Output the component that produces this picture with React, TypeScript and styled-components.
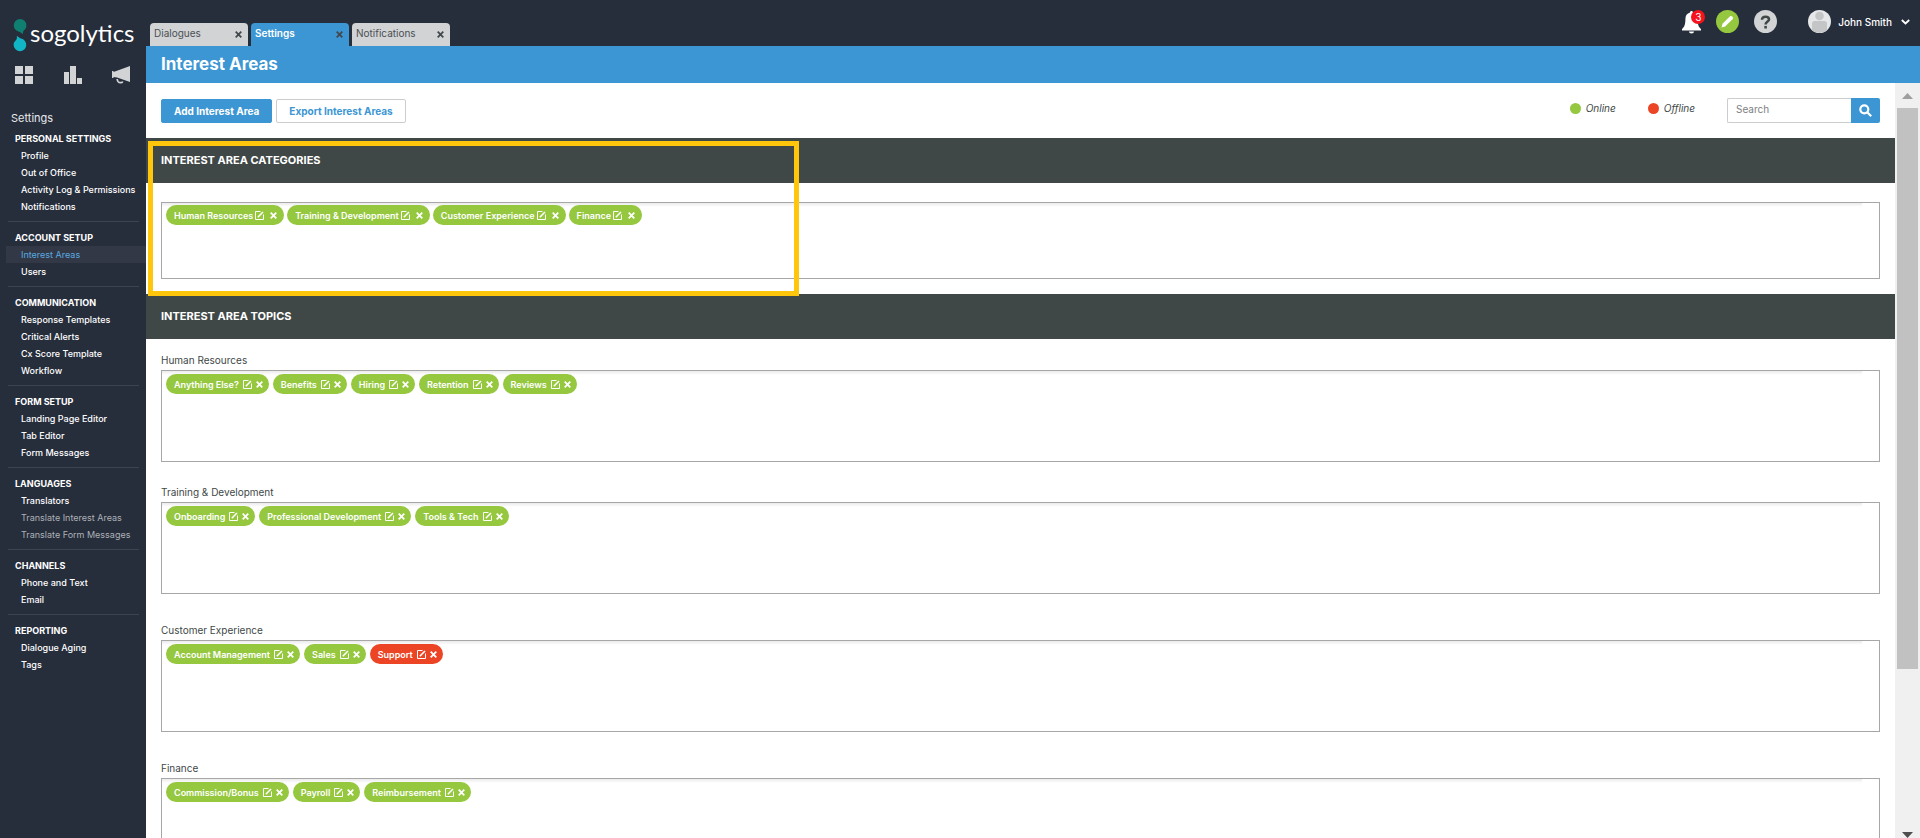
import React from "react";
import styled, { createGlobalStyle } from "styled-components";

const colors = {
  navy: "#262d3b",
  navyActive: "#323845",
  divider: "#3d4350",
  blue: "#3c96d3",
  slate: "#404847",
  green: "#95c73f",
  red: "#ec4526",
  grey: "#d1d3d4",
  boxBorder: "#a7a7a7",
  highlight: "#ffc60b",
};

const GlobalStyle = createGlobalStyle`
  * { box-sizing: border-box; }
  body {
    margin: 0;
    font-family: Inter, "Open Sans", sans-serif;
    font-size: 10px;
    color: ${colors.slate};
    background: #fff;
  }
  button, input { font: inherit; color: inherit; }
  button { border: 0; padding: 0; background: none; cursor: pointer; }
  a { color: inherit; text-decoration: none; }
  h1, h2, h3, ul, p { margin: 0; padding: 0; }
  ul { list-style: none; }
  svg { display: block; flex: none; }
`;

const Shell = styled.div`
  display: grid;
  grid-template-columns: 146px minmax(0, 1fr);
  height: 100vh;
  overflow: hidden;
`;

const Sidebar = styled.aside`
  background: ${colors.navy};
  color: #fff;
  overflow: hidden;
`;

const Logo = styled.a`
  display: flex;
  align-items: center;
  gap: 3px;
  height: 34px;
  margin-top: 18px;
  padding-left: 13px;
`;

const LogoName = styled.span`
  padding-bottom: 4px;
  font-family: Lato, sans-serif;
  font-size: 24px;
  line-height: 28px;
`;

const QuickNav = styled.nav`
  display: flex;
  justify-content: space-between;
  padding: 14px 16px 0 15px;
  color: ${colors.grey};
`;

const SidebarTitle = styled.h2`
  margin-top: 24px;
  padding-left: 11px;
  font-size: 11px;
  font-weight: 400;
  line-height: 20px;
  color: #e8e9eb;
`;

const MenuSection = styled.section`
  padding-bottom: 6px;

  & + &::before {
    content: "";
    display: block;
    height: 1px;
    margin: 0 7px 8px 8px;
    background: ${colors.divider};
  }
  &:first-of-type {
    padding-top: 3px;
  }
`;

const MenuHeading = styled.h3`
  padding-left: 15px;
  font-size: 9px;
  font-weight: 700;
  line-height: 16px;
`;

const MenuLink = styled.a<{ $active?: boolean; $muted?: boolean }>`
  display: block;
  margin-left: 6px;
  padding-left: 15px;
  font-size: 9px;
  font-weight: ${(p) => (p.$muted || p.$active ? 400 : 500)};
  line-height: 17px;
  white-space: nowrap;
  color: ${(p) => (p.$active ? "#5aa9e0" : p.$muted ? "#adb1b7" : "#fff")};
  background: ${(p) => (p.$active ? colors.navyActive : "transparent")};
`;

const Workspace = styled.div`
  display: flex;
  flex-direction: column;
  min-width: 0;
  min-height: 0;
`;

const TopBar = styled.header`
  display: flex;
  justify-content: space-between;
  height: 46px;
  padding: 0 10px 0 4px;
  background: ${colors.navy};
  color: #fff;
`;

const TabStrip = styled.nav`
  display: flex;
  align-items: flex-end;
  gap: 3px;
`;

const Tab = styled.div<{ $active?: boolean }>`
  display: flex;
  justify-content: space-between;
  align-items: center;
  width: 98px;
  height: 23px;
  padding: 0 6px 3px 4px;
  border-radius: 4px 4px 0 0;
  font-weight: ${(p) => (p.$active ? 600 : 400)};
  color: ${(p) => (p.$active ? "#fff" : "#4b4f54")};
  background: ${(p) => (p.$active ? colors.blue : colors.grey)};

  button {
    padding-top: 3px;
    color: #43484d;
  }
`;

const AccountTools = styled.div`
  display: flex;
  align-items: center;
  gap: 15px;
  padding-bottom: 3px;
`;

const BellButton = styled.button`
  position: relative;
  height: 24px;
`;

const Badge = styled.span`
  position: absolute;
  top: 0;
  right: -4px;
  width: 14px;
  height: 14px;
  border-radius: 50%;
  background: #f5141d;
  line-height: 14px;
  text-align: center;
`;

const RoundButton = styled.button<{ $tone: string }>`
  display: grid;
  place-items: center;
  width: 23px;
  height: 23px;
  border-radius: 50%;
  background: ${(p) => p.$tone};
  color: #fff;
`;

const UserMenu = styled.button`
  display: flex;
  align-items: center;
  gap: 7px;
  margin-left: 16px;
  font-weight: 500;

  svg:last-child {
    margin-left: 2px;
  }
`;

const TitleBar = styled.div`
  height: 37px;
  padding: 6px 15px 0;
  background: ${colors.blue};
  color: #fff;

  h1 {
    font-size: 17px;
    font-weight: 700;
    line-height: 24px;
  }
`;

const Body = styled.div`
  display: grid;
  grid-template-columns: minmax(0, 1fr) 25px;
  flex: 1;
  min-height: 0;
`;

const Content = styled.main`
  overflow-y: auto;
  scrollbar-width: none;
`;

const Toolbar = styled.div`
  display: flex;
  justify-content: space-between;
  align-items: center;
  height: 55px;
  padding: 0 15px;
`;

const ButtonRow = styled.div`
  display: flex;
  gap: 4px;
`;

const ActionButton = styled.button<{ $primary?: boolean }>`
  height: 24px;
  padding: 0 12px;
  border: 1px solid ${(p) => (p.$primary ? colors.blue : "#cbcdce")};
  border-radius: 2px;
  font-weight: 700;
  color: ${(p) => (p.$primary ? "#fff" : colors.blue)};
  background: ${(p) => (p.$primary ? colors.blue : "#fff")};
`;

const ToolbarEnd = styled.div`
  display: flex;
  align-items: center;
  gap: 32px;
`;

const LegendItem = styled.span<{ $tone: string }>`
  display: flex;
  align-items: center;
  gap: 5px;
  padding-bottom: 5px;
  font-style: italic;

  &::before {
    content: "";
    width: 11px;
    height: 11px;
    border-radius: 50%;
    background: ${(p) => p.$tone};
  }
`;

const SearchForm = styled.form`
  display: flex;
  height: 25px;
`;

const SearchInput = styled.input`
  width: 124px;
  padding: 0 8px 4px;
  border: 1px solid #cbcdce;
  border-right: 0;
  border-radius: 2px 0 0 2px;
  outline: 0;

  &::placeholder {
    color: #7d8082;
    opacity: 1;
  }
`;

const SearchButton = styled.button`
  display: grid;
  place-items: center;
  width: 29px;
  border-radius: 0 2px 2px 0;
  background: ${colors.blue};
  color: #fff;
`;

const Panel = styled.section`
  position: relative;
`;

const PanelHeader = styled.h2`
  height: 45px;
  padding: 12px 15px 0;
  font-size: 11px;
  font-weight: 700;
  line-height: 20px;
  color: #fff;
  background: ${colors.slate};
`;

const CategoryBody = styled.div`
  padding: 19px 15px 15px;
`;

const TopicBody = styled.div`
  padding: 11px 15px;
`;

const TopicGroup = styled.div<{ $tight?: boolean }>`
  margin-bottom: ${(p) => (p.$tight ? 20 : 26)}px;
`;

const TopicLabel = styled.h3`
  font-size: 10px;
  font-weight: 400;
  line-height: 20px;
`;

const PillBox = styled.ul<{ $topics?: boolean }>`
  display: flex;
  flex-wrap: wrap;
  align-content: flex-start;
  gap: ${(p) => (p.$topics ? 4 : 3)}px;
  min-height: ${(p) => (p.$topics ? 92 : 77)}px;
  padding: ${(p) => (p.$topics ? 3 : 2)}px 4px;
  border: 1px solid ${colors.boxBorder};
  background: linear-gradient(#ebebeb, #fff) no-repeat top left / calc(100% - 17px) 4px;
`;

const Pill = styled.li<{ $offline?: boolean; $topic?: boolean }>`
  display: flex;
  align-items: center;
  height: 20px;
  padding: 0 ${(p) => (p.$topic ? 6 : 7)}px 0 8px;
  border-radius: 10px;
  font-size: 9px;
  font-weight: 600;
  white-space: nowrap;
  color: #fff;
  background: ${(p) => (p.$offline ? colors.red : colors.green)};

  button:nth-of-type(1) {
    margin-left: ${(p) => (p.$topic ? 4 : 2)}px;
  }
  button:nth-of-type(2) {
    margin-left: ${(p) => (p.$topic ? 4 : 6)}px;
  }
`;

const Callout = styled.div`
  position: absolute;
  top: 3px;
  left: 2px;
  z-index: 1;
  width: 651px;
  height: 155px;
  border: 5px solid ${colors.highlight};
  pointer-events: none;
`;

const ScrollTrack = styled.div`
  display: flex;
  flex-direction: column;
  align-items: center;
  background: #f0f0f0;
`;

const ScrollEnd = styled.div<{ $down?: boolean }>`
  display: flex;
  justify-content: center;
  align-items: ${(p) => (p.$down ? "flex-end" : "center")};
  height: ${(p) => (p.$down ? 0 : 25)}px;
  color: ${(p) => (p.$down ? "#4d4d4d" : "#9f9f9f")};
`;

const ScrollThumb = styled.div`
  flex: 561;
  width: 21px;
  background: #c1c1c1;
`;

const ScrollRest = styled.div`
  flex: 169;
`;

const LogoMark = () => (
  <svg width="14" height="34" viewBox="0 0 14 34" aria-hidden="true">
    <path d="M7 1a6.4 6.4 0 0 1 6.4 6.4c0 2.400-1.200 3.900-2.500 5-.9.900-1 2-.8 3.600C8.500 15.600 7.500 14 6 13.700A6.400 6.400 0 0 1 7 1z" fill="#0f7f72" />
    <path d="M7 33.200A6.400 6.400 0 0 1 .6 26.800c0-2.200 1.200-3.800 2.500-4.900 1-.9 1-2 .6-3.800 1.700.7 2.500 2 4.300 2.400A6.400 6.400 0 0 1 7 33.200z" fill="#10b5c6" />
  </svg>
);

const GridIcon = () => (
  <svg width="18" height="18" viewBox="0 0 18 18" fill="currentColor" aria-hidden="true">
    <path d="M0 0h8v8H0zM10 0h8v8h-8zM0 10h8v8H0zM10 10h8v8h-8z" />
  </svg>
);

const ChartIcon = () => (
  <svg width="18" height="18" viewBox="0 0 18 18" fill="currentColor" aria-hidden="true">
    <path d="M0 6h5v12H0zM6 0h6v18H6zM13 12h5v6h-5z" />
  </svg>
);

const MegaphoneIcon = () => (
  <svg width="18" height="18" viewBox="0 0 18 18" fill="currentColor" aria-hidden="true">
    <path d="M18 0v16L5 11.600 1.500 11V12H0V5h1.500v1z" />
    <path d="M5.200 13c.2 2.400 1.500 3.700 3.300 3.700 1.200 0 2-.6 2.200-1.300" fill="none" stroke="currentColor" strokeWidth="1.700" />
  </svg>
);

const CrossIcon = () => (
  <svg width="7" height="7" viewBox="0 0 7 7" stroke="currentColor" strokeWidth="1.800" aria-hidden="true">
    <path d="M.7.7l5.600 5.600M6.300.7L.7 6.300" />
  </svg>
);

const EditIcon = () => (
  <svg width="9" height="9" viewBox="0 0 9 9" fill="none" stroke="currentColor" aria-hidden="true">
    <path d="M5.500.5h-5v8h8v-5" />
    <path d="M2.800 6.200L8 1" strokeWidth="1.600" />
  </svg>
);

const BellIcon = () => (
  <svg width="19" height="24" viewBox="0 0 19 24" fill="#fff" aria-hidden="true">
    <path d="M9.500 1c.9 0 1.500.6 1.500 1.500 3 .8 4.600 3.300 4.600 6.500 0 5.500 1 8 3.400 10v1.500H0V19c2.400-2 3.400-4.500 3.400-10C3.400 5.800 5 3.300 8 2.500 8 1.600 8.600 1 9.500 1zM7 21.500h5c0 1.300-1 2-2.500 2s-2.500-.7-2.500-2z" />
  </svg>
);

const PencilIcon = () => (
  <svg width="13" height="13" viewBox="0 0 13 13" fill="#fff" aria-hidden="true">
    <path d="M.5 12.500l1-3.700 7.300-7.300c1.500-1.400 4.300 1 2.700 2.700L4.200 11.500z" />
  </svg>
);

const HelpIcon = () => (
  <svg width="11" height="14" viewBox="0 0 11 14" fill="none" stroke={colors.slate} strokeWidth="2.600" aria-hidden="true">
    <path d="M2 4.800C2 2.800 3.400 1.800 5.400 1.800S9 2.700 9 4.500C9 6.600 5.600 6.500 5.600 9.500" />
    <path d="M5.600 10.900v2.600" />
  </svg>
);

const AvatarIcon = () => (
  <svg width="23" height="23" viewBox="0 0 23 23" aria-hidden="true">
    <circle cx="11.500" cy="11.500" r="11.500" fill="#e6e7e8" />
    <circle cx="11.500" cy="6" r="4.300" fill="#c3c5c7" />
    <path d="M4 13.500c0-1.500 1-2.500 2.500-2.500h10c1.500 0 2.500 1 2.500 2.500v6.700a11.500 11.500 0 0 1-15 0z" fill="#c3c5c7" />
  </svg>
);

const ChevronIcon = () => (
  <svg width="9" height="6" viewBox="0 0 9 6" fill="none" stroke="currentColor" strokeWidth="1.800" aria-hidden="true">
    <path d="M.8 1l3.700 3.500L8.200 1" />
  </svg>
);

const SearchIcon = () => (
  <svg width="13" height="13" viewBox="0 0 13 13" fill="none" stroke="currentColor" strokeWidth="2.200" aria-hidden="true">
    <circle cx="5.300" cy="5.300" r="4" />
    <path d="M8.200 8.200l4 4" />
  </svg>
);

const ArrowIcon = ({ down }: { down?: boolean }) => (
  <svg width="11" height="6" viewBox="0 0 11 6" fill="currentColor" aria-hidden="true">
    <path d={down ? "M0 0h11L5.500 6z" : "M0 6h11L5.500 0z"} />
  </svg>
);

type MenuItem = { label: string; active?: boolean; muted?: boolean };

const menu: { heading: string; items: MenuItem[] }[] = [
  {
    heading: "PERSONAL SETTINGS",
    items: [
      { label: "Profile" },
      { label: "Out of Office" },
      { label: "Activity Log & Permissions" },
      { label: "Notifications" },
    ],
  },
  { heading: "ACCOUNT SETUP", items: [{ label: "Interest Areas", active: true }, { label: "Users" }] },
  {
    heading: "COMMUNICATION",
    items: [
      { label: "Response Templates" },
      { label: "Critical Alerts" },
      { label: "Cx Score Template" },
      { label: "Workflow" },
    ],
  },
  {
    heading: "FORM SETUP",
    items: [{ label: "Landing Page Editor" }, { label: "Tab Editor" }, { label: "Form Messages" }],
  },
  {
    heading: "LANGUAGES",
    items: [
      { label: "Translators" },
      { label: "Translate Interest Areas", muted: true },
      { label: "Translate Form Messages", muted: true },
    ],
  },
  { heading: "CHANNELS", items: [{ label: "Phone and Text" }, { label: "Email" }] },
  { heading: "REPORTING", items: [{ label: "Dialogue Aging" }, { label: "Tags" }] },
];

const tabs = ["Dialogues", "Settings", "Notifications"];

const categories = ["Human Resources", "Training & Development", "Customer Experience", "Finance"];

const topics: { name: string; items: string[]; tight?: boolean }[] = [
  { name: "Human Resources", items: ["Anything Else?", "Benefits", "Hiring", "Retention", "Reviews"], tight: true },
  { name: "Training & Development", items: ["Onboarding", "Professional Development", "Tools & Tech"] },
  { name: "Customer Experience", items: ["Account Management", "Sales", "Support"] },
  { name: "Finance", items: ["Commission/Bonus", "Payroll", "Reimbursement"] },
];

const offline = new Set(["Support"]);

const AreaPill = ({ name, topic }: { name: string; topic?: boolean }) => (
  <Pill $topic={topic} $offline={offline.has(name)}>
    {name}
    <button type="button" aria-label={`Edit ${name}`}>
      <EditIcon />
    </button>
    <button type="button" aria-label={`Remove ${name}`}>
      <CrossIcon />
    </button>
  </Pill>
);

export default function App() {
  return (
    <>
      <GlobalStyle />
      <Shell>
        <Sidebar>
          <Logo href="#home">
            <LogoMark />
            <LogoName>sogolytics</LogoName>
          </Logo>
          <QuickNav aria-label="Modules">
            <a href="#dashboard" aria-label="Dashboard"><GridIcon /></a>
            <a href="#reports" aria-label="Reports"><ChartIcon /></a>
            <a href="#campaigns" aria-label="Campaigns"><MegaphoneIcon /></a>
          </QuickNav>
          <SidebarTitle>Settings</SidebarTitle>
          <nav aria-label="Settings">
            {menu.map((section) => (
              <MenuSection key={section.heading}>
                <MenuHeading>{section.heading}</MenuHeading>
                {section.items.map((item) => (
                  <MenuLink key={item.label} href="#settings" $active={item.active} $muted={item.muted}>
                    {item.label}
                  </MenuLink>
                ))}
              </MenuSection>
            ))}
          </nav>
        </Sidebar>

        <Workspace>
          <TopBar>
            <TabStrip aria-label="Open pages">
              {tabs.map((tab) => (
                <Tab key={tab} $active={tab === "Settings"}>
                  <a href="#tab">{tab}</a>
                  <button type="button" aria-label={`Close ${tab}`}>
                    <CrossIcon />
                  </button>
                </Tab>
              ))}
            </TabStrip>
            <AccountTools>
              <BellButton type="button" aria-label="Alerts">
                <BellIcon />
                <Badge>3</Badge>
              </BellButton>
              <RoundButton type="button" $tone={colors.green} aria-label="Compose">
                <PencilIcon />
              </RoundButton>
              <RoundButton type="button" $tone={colors.grey} aria-label="Help">
                <HelpIcon />
              </RoundButton>
              <UserMenu type="button">
                <AvatarIcon />
                John Smith
                <ChevronIcon />
              </UserMenu>
            </AccountTools>
          </TopBar>

          <TitleBar>
            <h1>Interest Areas</h1>
          </TitleBar>

          <Body>
            <Content>
              <Toolbar>
                <ButtonRow>
                  <ActionButton type="button" $primary>Add Interest Area</ActionButton>
                  <ActionButton type="button">Export Interest Areas</ActionButton>
                </ButtonRow>
                <ToolbarEnd>
                  <LegendItem $tone={colors.green}>Online</LegendItem>
                  <LegendItem $tone={colors.red}>Offline</LegendItem>
                  <SearchForm role="search">
                    <SearchInput type="text" placeholder="Search" aria-label="Search" />
                    <SearchButton type="submit" aria-label="Run search">
                      <SearchIcon />
                    </SearchButton>
                  </SearchForm>
                </ToolbarEnd>
              </Toolbar>

              <Panel>
                <PanelHeader>INTEREST AREA CATEGORIES</PanelHeader>
                <CategoryBody>
                  <PillBox>
                    {categories.map((name) => (
                      <AreaPill key={name} name={name} />
                    ))}
                  </PillBox>
                </CategoryBody>
                <Callout />
              </Panel>

              <Panel>
                <PanelHeader>INTEREST AREA TOPICS</PanelHeader>
                <TopicBody>
                  {topics.map((group) => (
                    <TopicGroup key={group.name} $tight={group.tight}>
                      <TopicLabel>{group.name}</TopicLabel>
                      <PillBox $topics>
                        {group.items.map((name) => (
                          <AreaPill key={name} name={name} topic />
                        ))}
                      </PillBox>
                    </TopicGroup>
                  ))}
                </TopicBody>
              </Panel>
            </Content>

            <ScrollTrack aria-hidden="true">
              <ScrollEnd><ArrowIcon /></ScrollEnd>
              <ScrollThumb />
              <ScrollRest />
              <ScrollEnd $down><ArrowIcon down /></ScrollEnd>
            </ScrollTrack>
          </Body>
        </Workspace>
      </Shell>
    </>
  );
}
